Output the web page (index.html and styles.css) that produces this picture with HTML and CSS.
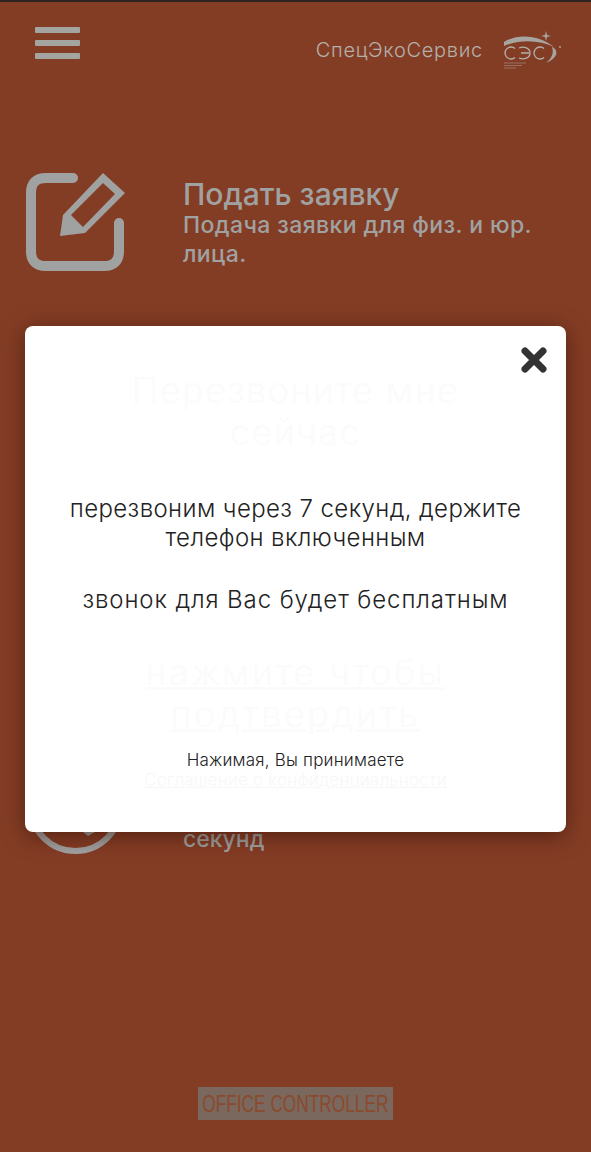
FILE: index.html
```html
<!DOCTYPE html>
<html lang="ru">
<head>
    <meta charset="UTF-8">
    <meta name="viewport" content="width=device-width, initial-scale=1.0">
    <title>СпецЭкоСервис</title>
    <link rel="stylesheet" href="styles.css">
</head>
<body>
    <div class="page">
        <header class="top">
            <div class="burger"><span></span><span></span><span></span></div>
            <div class="brand">
                <span class="brand-name">СпецЭкоСервис</span>
                <svg class="logo" width="60" height="40" viewBox="0 0 60 40" fill="none">
                    <path d="M2 12C16 3 38 5 52 17C38 10 18 9 2 16Z" fill="#a7a59f"/>
                    <path d="M50 17C57 20 56 28 44 33C50 28 52 23 50 17Z" fill="#a7a59f"/>
                    <path d="M13 18.500A6 6 0 1 0 13 27.500M17 18C22 16 28 18 28 23C28 28 22 30 17 28M19 23H27M42 18.500A6 6 0 1 0 42 27.500" stroke="#b3b1ab" stroke-width="1.300"/>
                    <path d="M2 33H24M2 35.500H20M2 38H14" stroke="#a7a59f" stroke-width="1" opacity=".5"/>
                    <path d="M44 1L45 5L49 6L45 7L44 11L43 7L39 6L43 5Z" fill="#a7a59f"/>
                    <circle cx="58" cy="17" r="1" fill="#a7a59f"/>
                </svg>
            </div>
        </header>

        <section class="item item-first">
            <svg class="item-icon" width="104" height="102" viewBox="0 0 104 102" fill="none">
                <path d="M51 7H24Q9 7 9 22V80Q9 95 24 95H82Q97 95 97 80V52" stroke="#a0a2a2" stroke-width="10" stroke-linecap="round"/>
                <path fill-rule="evenodd" d="M81 2L103 22L63 62L38 65L41 44ZM81 12L49 44L61 56L93 23Z" fill="#a0a2a2"/>
            </svg>
            <div class="item-text">
                <h2>Подать заявку</h2>
                <p>Подача заявки для физ. и юр. лица.</p>
            </div>
        </section>

        <section class="item item-last">
            <svg class="item-icon" width="104" height="58" viewBox="0 0 104 58" fill="none">
                <circle cx="53.500" cy="9" r="45" stroke="#a0a2a2" stroke-width="6"/>
                <path d="M61 35L66 39L73 35Z" fill="#a0a2a2"/>
            </svg>
            <div class="item-text">
                <p>секунд</p>
            </div>
        </section>

        <footer class="foot">
            <div class="foot-label"><span>OFFICE CONTROLLER</span></div>
        </footer>

        <div class="modal">
            <button class="close" aria-label="Закрыть">
                <svg width="26" height="26" viewBox="0 0 26 26">
                    <path d="M4 4L22 22M22 4L4 22" stroke="#333" stroke-width="7" stroke-linecap="round"/>
                </svg>
            </button>
            <h3 class="ghost-title">Перезвоните мне сейчас</h3>
            <p class="msg">перезвоним через 7 секунд, держите телефон включенным</p>
            <p class="msg msg-free">звонок для Вас будет бесплатным</p>
            <a class="ghost-link" href="#">нажмите чтобы подтвердить</a>
            <p class="note">Нажимая, Вы принимаете</p>
            <a class="ghost-note" href="#">Соглашение о конфиденциальности</a>
        </div>
    </div>
</body>
</html>
```

FILE: styles.css
```css
* {
    box-sizing: border-box;
}

body {
    margin: 0;
    font-family: Inter, "Noto Sans", sans-serif;
    background-color: #843d25;
}

.page {
    position: relative;
    display: flex;
    flex-direction: column;
    height: 1152px;
    padding: 0 29px 32px 22px;
    border-top: 2px solid #2b2422;
    overflow: hidden;
}

.top {
    display: flex;
    justify-content: space-between;
    align-items: flex-start;
    padding: 25px 0 0 13px;
}

.burger {
    display: flex;
    flex-direction: column;
    gap: 7px;
    width: 45px;
}

.burger span {
    height: 6px;
    border-radius: 1px;
    background-color: #a4a4a0;
}

.brand {
    display: flex;
    align-items: center;
    gap: 19px;
    margin-top: 3px;
}

.brand-name {
    font-size: 20px;
    font-weight: 300;
    letter-spacing: 0.7px;
    color: #b3b1ab;
}

.item {
    display: flex;
    gap: 57px;
    color: #a0a2a2;
}

.item-first {
    margin-top: 101px;
}

.item-last {
    margin-top: 524px;
    align-items: flex-end;
}

.item-icon {
    flex-shrink: 0;
}

.item-text {
    padding-top: 6px;
}

.item-text h2 {
    margin: 0;
    font-size: 30px;
    font-weight: 500;
    line-height: 34px;
}

.item-text p {
    margin: 0;
    font-size: 23px;
    font-weight: 500;
    letter-spacing: 0.4px;
    line-height: 29px;
}

.item-last .item-text {
    padding: 0 0 1px;
}

.item-last .item-text p {
    letter-spacing: 0;
}

.foot {
    display: flex;
    justify-content: center;
    margin-top: auto;
    margin-left: 6px;
}

.foot-label {
    display: flex;
    justify-content: center;
    width: 195px;
    padding: 3px 0;
    background-color: #7a675e;
}

.foot-label span {
    flex-shrink: 0;
    font-family: "Liberation Sans", sans-serif;
    font-size: 24px;
    line-height: 27px;
    white-space: nowrap;
    color: #8a4a2c;
    transform: scaleX(0.72);
}

.modal {
    position: absolute;
    top: 324px;
    left: 25px;
    width: 541px;
    height: 506px;
    padding: 43px 40px 0;
    text-align: center;
    color: #222;
    background-color: #fff;
    border-radius: 8px;
    box-shadow: 0 4px 22px rgba(50, 15, 5, 0.6);
}

.close {
    position: absolute;
    top: 21px;
    right: 19px;
    padding: 0;
    border: none;
    background: none;
}

.ghost-title {
    margin: 0 50px;
    font-size: 36px;
    font-weight: 300;
    letter-spacing: 1.4px;
    line-height: 42px;
    color: #fbfbfb;
}

.msg {
    margin: 0 -10px;
    font-size: 24px;
    font-weight: 300;
    letter-spacing: 0.4px;
    line-height: 29px;
}

.ghost-title + .msg {
    margin-top: 41px;
}

.msg-free {
    margin-top: 33px;
    letter-spacing: 0.9px;
}

.ghost-link {
    display: block;
    margin: 37px 50px 0;
    font-size: 36px;
    font-weight: 300;
    letter-spacing: 2.5px;
    line-height: 42px;
    color: #fbfbfb;
}

.note {
    margin: 15px 0 0;
    font-size: 17px;
    font-weight: 300;
    letter-spacing: 0.2px;
    line-height: 20px;
}

.ghost-note {
    display: block;
    font-size: 17px;
    font-weight: 300;
    letter-spacing: 0.2px;
    line-height: 20px;
    color: #f7f7f7;
}
```
